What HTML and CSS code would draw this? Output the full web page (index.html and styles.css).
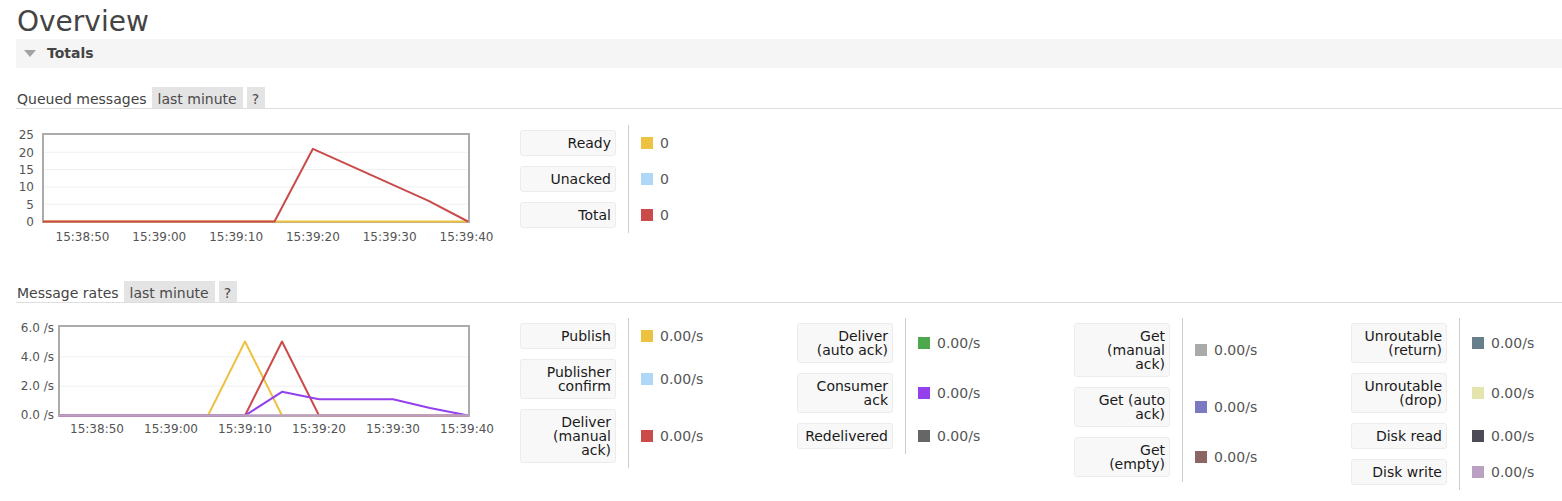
FILE: index.html
```html
<!DOCTYPE html>
<html lang="en">
<head>
<meta charset="utf-8">
<title>Overview</title>
<link rel="stylesheet" href="styles.css">
</head>
<body>
<div class="page">
  <h1 class="title">Overview</h1>
  <div class="section-bar">
    <svg class="toggle" width="12" height="7" viewBox="0 0 12 7"><polygon points="0,0 12,0 6,7"/></svg>
    <span class="section-name">Totals</span>
  </div>

  <div class="panel">
    <div class="sec-head">
      <h2 class="sec-title">Queued messages</h2>
      <span class="tag">last minute</span>
      <span class="tag">?</span>
    </div>
    <div class="chart-row chart-row--queued">
      <svg class="chart" width="504" height="136" viewBox="16 109 504 136">
        <g class="grid">
          <line x1="43" y1="152.3" x2="469" y2="152.3"/>
          <line x1="43" y1="169.6" x2="469" y2="169.6"/>
          <line x1="43" y1="186.9" x2="469" y2="186.9"/>
          <line x1="43" y1="204.2" x2="469" y2="204.2"/>
        </g>
        <rect class="frame" x="43" y="134" width="426" height="88"/>
        <g class="axis axis-y">
          <text x="34" y="139.4">25</text>
          <text x="34" y="156.7">20</text>
          <text x="34" y="174">15</text>
          <text x="34" y="191.3">10</text>
          <text x="34" y="208.6">5</text>
          <text x="34" y="225.9">0</text>
        </g>
        <g class="axis axis-x">
          <text x="82.5" y="240.5">15:38:50</text>
          <text x="159.3" y="240.5">15:39:00</text>
          <text x="236.1" y="240.5">15:39:10</text>
          <text x="312.9" y="240.5">15:39:20</text>
          <text x="389.7" y="240.5">15:39:30</text>
          <text x="466.5" y="240.5">15:39:40</text>
        </g>
        <polyline class="series s-yellow" points="43,221.5 468,221.5"/>
        <polyline class="series s-red" points="43,221.5 274.5,221.5 312.9,148.8 428.1,200.7 468,221.5"/>
      </svg>
      <div class="legend-cols">
        <table class="legend">
          <tr><th><div class="lbl">Ready</div></th><td><span class="val"><i class="sw c-yellow"></i>0</span></td></tr>
          <tr><th><div class="lbl">Unacked</div></th><td><span class="val"><i class="sw c-blue"></i>0</span></td></tr>
          <tr><th><div class="lbl">Total</div></th><td><span class="val"><i class="sw c-red"></i>0</span></td></tr>
        </table>
      </div>
    </div>
  </div>

  <div class="panel panel--rates">
    <div class="sec-head">
      <h2 class="sec-title">Message rates</h2>
      <span class="tag">last minute</span>
      <span class="tag">?</span>
    </div>
    <div class="chart-row chart-row--rates">
      <svg class="chart" width="504" height="135" viewBox="16 303 504 135">
        <g class="grid">
          <line x1="59" y1="356.8" x2="469" y2="356.8"/>
          <line x1="59" y1="386.2" x2="469" y2="386.2"/>
        </g>
        <rect class="frame" x="59" y="326" width="410" height="90"/>
        <g class="axis axis-y">
          <text x="54" y="332.4">6.0 /s</text>
          <text x="54" y="361.4">4.0 /s</text>
          <text x="54" y="390.4">2.0 /s</text>
          <text x="54" y="419.4">0.0 /s</text>
        </g>
        <g class="axis axis-x">
          <text x="97" y="433">15:38:50</text>
          <text x="171" y="433">15:39:00</text>
          <text x="245" y="433">15:39:10</text>
          <text x="319" y="433">15:39:20</text>
          <text x="393" y="433">15:39:30</text>
          <text x="467" y="433">15:39:40</text>
        </g>
        <polyline class="series s-yellow" points="59,415.5 208,415.5 245,341.5 282,415.5 468,415.5"/>
        <polyline class="series s-red" points="59,415.5 245,415.5 282,341.5 319,415.5 468,415.5"/>
        <polyline class="series s-purple" points="59,415.5 245,415.5 282,391.8 319,399.2 393,399.2 430,408 468,415.5"/>
        <polyline class="series s-mauve" points="59,415.5 468,415.5"/>
      </svg>
      <div class="legend-cols">
        <table class="legend">
          <tr><th><div class="lbl">Publish</div></th><td><span class="val"><i class="sw c-yellow"></i>0.00/s</span></td></tr>
          <tr><th><div class="lbl">Publisher<br>confirm</div></th><td><span class="val"><i class="sw c-blue"></i>0.00/s</span></td></tr>
          <tr><th><div class="lbl">Deliver<br>(manual<br>ack)</div></th><td><span class="val"><i class="sw c-red"></i>0.00/s</span></td></tr>
        </table>
        <table class="legend">
          <tr><th><div class="lbl">Deliver<br>(auto ack)</div></th><td><span class="val"><i class="sw c-green"></i>0.00/s</span></td></tr>
          <tr><th><div class="lbl">Consumer<br>ack</div></th><td><span class="val"><i class="sw c-purple"></i>0.00/s</span></td></tr>
          <tr><th><div class="lbl">Redelivered</div></th><td><span class="val"><i class="sw c-dgray"></i>0.00/s</span></td></tr>
        </table>
        <table class="legend">
          <tr><th><div class="lbl">Get<br>(manual<br>ack)</div></th><td><span class="val"><i class="sw c-lgray"></i>0.00/s</span></td></tr>
          <tr><th><div class="lbl">Get (auto<br>ack)</div></th><td><span class="val"><i class="sw c-violet"></i>0.00/s</span></td></tr>
          <tr><th><div class="lbl">Get<br>(empty)</div></th><td><span class="val"><i class="sw c-brown"></i>0.00/s</span></td></tr>
        </table>
        <table class="legend">
          <tr><th><div class="lbl">Unroutable<br>(return)</div></th><td><span class="val"><i class="sw c-slate"></i>0.00/s</span></td></tr>
          <tr><th><div class="lbl">Unroutable<br>(drop)</div></th><td><span class="val"><i class="sw c-khaki"></i>0.00/s</span></td></tr>
          <tr><th><div class="lbl">Disk read</div></th><td><span class="val"><i class="sw c-ink"></i>0.00/s</span></td></tr>
          <tr><th><div class="lbl">Disk write</div></th><td><span class="val"><i class="sw c-mauve"></i>0.00/s</span></td></tr>
        </table>
      </div>
    </div>
  </div>
</div>
</body>
</html>
```

FILE: styles.css
```css
html, body {
  margin: 0;
  padding: 0;
  background: #fff;
}

body {
  font-family: "DejaVu Sans", Verdana, sans-serif;
  font-size: 14px;
  color: #444;
}

.page {
  padding-left: 16px;
}

.title {
  margin: 0 0 0 1px;
  padding-top: 5px;
  font-size: 28px;
  line-height: 34px;
  font-weight: normal;
  color: #444;
}

.section-bar {
  display: flex;
  align-items: center;
  height: 29px;
  background: #f5f5f5;
}

.toggle {
  margin-left: 8px;
  fill: #a3a3a3;
}

.section-name {
  margin-left: 11px;
  font-weight: bold;
  font-size: 14px;
  line-height: 29px;
  color: #444;
}

.panel {
  margin-top: 19px;
}

.panel--rates {
  margin-top: 36px;
}

.sec-head {
  display: flex;
  align-items: stretch;
  border-bottom: 1px solid #ddd;
}

.sec-title,
.tag {
  padding-top: 3px;
  line-height: 18px;
  font-size: 14px;
}

.sec-title {
  margin: 0 0 0 1px;
  font-weight: normal;
  color: #444;
}

.tag {
  margin-left: 5px;
  padding-left: 6px;
  padding-right: 6px;
  background: #e4e4e4;
  color: #4a4a4a;
}

.tag + .tag {
  margin-left: 4px;
  padding-left: 5px;
  padding-right: 6px;
}

.chart-row {
  display: flex;
  align-items: flex-start;
}

.chart {
  flex: none;
  display: block;
}

.grid line {
  stroke: #f0f0f0;
  stroke-width: 1;
}

.frame {
  fill: none;
  stroke: #ababab;
  stroke-width: 2;
}

.axis text {
  font-family: "DejaVu Sans", Verdana, sans-serif;
  font-size: 12px;
  fill: #545454;
}

.axis-y text {
  text-anchor: end;
}

.axis-x text {
  text-anchor: middle;
}

.series {
  fill: none;
  stroke-width: 2;
  stroke-linejoin: round;
}

.s-yellow { stroke: #edc240; }
.s-red { stroke: #cb4b4b; }
.s-purple { stroke: #9440ed; }
.s-mauve { stroke: #bba0c1; stroke-width: 2.5; }

.legend-cols {
  display: flex;
  align-items: flex-start;
}

.chart-row--queued .legend-cols {
  margin-top: 16px;
}

.chart-row--rates .legend-cols {
  margin-top: 15px;
}

.legend {
  flex: none;
  border-collapse: separate;
  border-spacing: 0;
  width: 277px;
  font-size: 14px;
}

.legend:last-child {
  width: auto;
}

.legend th {
  width: 96px;
  padding: 5px 12px 5px 0;
  font-weight: normal;
  vertical-align: middle;
}

.legend td {
  width: 100%;
  padding: 0 0 0 12px;
  border-left: 1px solid #cccccc;
  vertical-align: middle;
}

.lbl {
  box-sizing: border-box;
  width: 96px;
  padding: 5px 4px 5px 5px;
  border: 1px solid #ececec;
  border-radius: 3px;
  background: #f8f8f8;
  text-align: right;
  line-height: 14px;
  color: #1a1a1a;
}

.val {
  display: flex;
  align-items: center;
  white-space: nowrap;
  color: #555;
  line-height: 16px;
}

.sw {
  display: inline-block;
  width: 12px;
  height: 12px;
  margin-right: 7px;
}

.c-yellow { background: #edc240; }
.c-blue { background: #afd8f8; }
.c-red { background: #cb4b4b; }
.c-green { background: #4da74d; }
.c-purple { background: #9440ed; }
.c-dgray { background: #666666; }
.c-lgray { background: #aaaaaa; }
.c-violet { background: #7c79c3; }
.c-brown { background: #8d6564; }
.c-slate { background: #667f8a; }
.c-khaki { background: #e5e3ae; }
.c-ink { background: #4b4a55; }
.c-mauve { background: #bba0c1; }
```
